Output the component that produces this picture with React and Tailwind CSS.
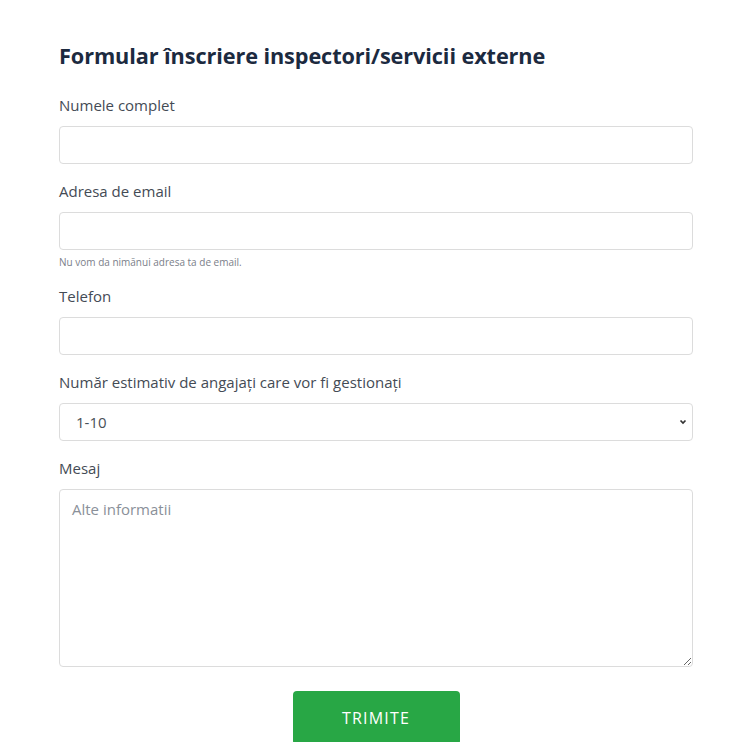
export default function App() {
  const font = { fontFamily: '"Open Sans", "Noto Sans", sans-serif' };
  const label = "block text-[15px] leading-[22px] text-[#444b55] mb-[10px]";
  const input =
    "block w-full h-[38px] px-3 rounded-[4px] border border-[#dcdcdc] bg-white text-[15px] text-[#495057] outline-none";

  return (
    <div className="min-h-screen bg-white" style={font}>
      <div className="w-[634px] ml-[59px] pt-[41px]">
        <h2 className="text-[21.7px] leading-[30px] font-bold text-[#1c2a3f] mb-[23px] tracking-[-0.1px]">
          Formular înscriere inspectori/servicii externe
        </h2>

        <form className="flex flex-col">
          <div className="mb-[16px]">
            <label className={label}>Numele complet</label>
            <input className={input} type="text" />
          </div>

          <div className="mb-[15px]">
            <label className={label}>Adresa de email</label>
            <input className={input} type="email" />
            <small className="block mt-[4px] text-[10px] leading-[16px] text-[#7a8089]">
              Nu vom da nimănui adresa ta de email.
            </small>
          </div>

          <div className="mb-[16px]">
            <label className={label}>Telefon</label>
            <input className={input} type="tel" />
          </div>

          <div className="mb-[16px]">
            <label className={label}>Număr estimativ de angajați care vor fi gestionați</label>
            <div className="relative">
              <select className={`${input} appearance-none pl-[16px]`} defaultValue="1-10">
                <option>1-10</option>
                <option>11-50</option>
                <option>51-100</option>
                <option>100+</option>
              </select>
              <svg
                className="absolute right-[5px] top-1/2 -translate-y-1/2 pointer-events-none"
                width="10"
                height="10"
                viewBox="0 0 10 10"
              >
                <path d="M2.5 3.5 L5 6 L7.5 3.5" fill="none" stroke="#333" strokeWidth="1.7" />
              </svg>
            </div>
          </div>

          <div className="mb-[24px]">
            <label className={label}>Mesaj</label>
            <textarea
              className="block w-full h-[178px] px-3 py-[8px] rounded-[4px] border border-[#dcdcdc] bg-white text-[15px] text-[#495057] outline-none placeholder:text-[#8a9099] resize-y"
              placeholder="Alte informatii"
            />
          </div>

          <div className="flex justify-center">
            <button
              type="button"
              className="w-[167px] h-[54px] rounded-[4px] bg-[#28a745] text-white text-[16px] tracking-[1.2px] uppercase"
            >
              Trimite
            </button>
          </div>
        </form>
      </div>
    </div>
  );
}
